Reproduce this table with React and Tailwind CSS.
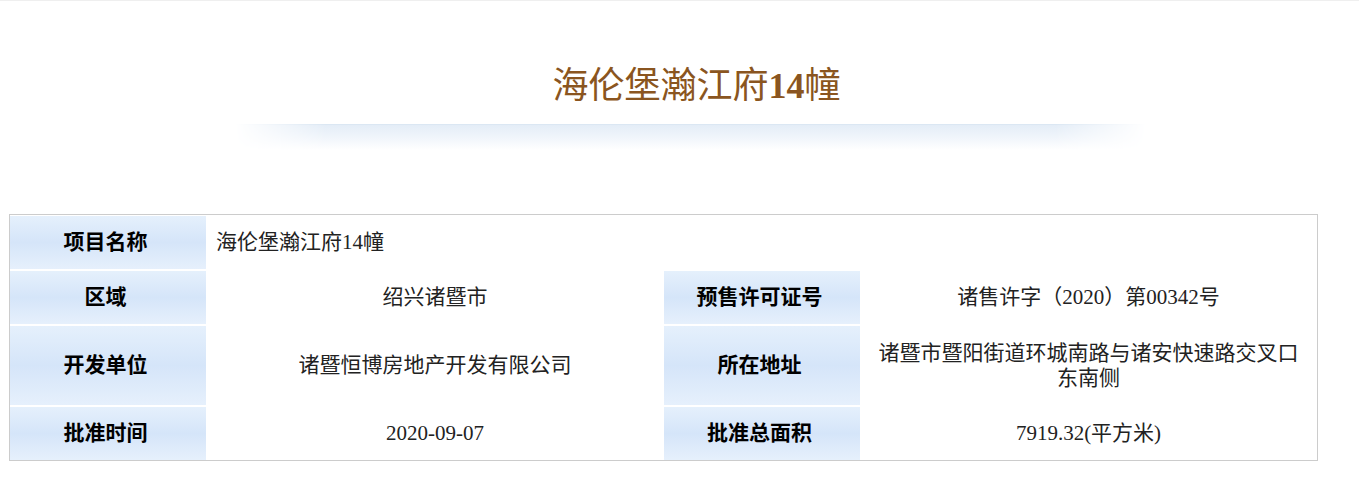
const rows = [
  { h: "h-[53px]", full: true, label: "项目名称", value: "海伦堡瀚江府14幢" },
  { h: "h-[53px]", label: "区域", value: "绍兴诸暨市", label2: "预售许可证号", value2: "诸售许字（2020）第00342号" },
  { h: "h-[79px]", label: "开发单位", value: "诸暨恒博房地产开发有限公司", label2: "所在地址", value2: "诸暨市暨阳街道环城南路与诸安快速路交叉口东南侧" },
  { h: "h-[53px]", label: "批准时间", value: "2020-09-07", label2: "批准总面积", value2: "7919.32(平方米)" },
];

const labelCls =
  "flex items-center justify-center pr-[5px] font-bold text-black bg-gradient-to-b from-[#e5f0fc] via-[#d5e5f9] to-[#e6f0fc]";

export default function App() {
  return (
    <div className="min-h-screen bg-white font-['Liberation_Serif','Noto_Sans_CJK_SC',serif]">
      <div className="h-px bg-[#efefef]" />

      <h1 className="mt-[65px] pl-[34px] text-center text-[36px] leading-[40px] font-normal text-[#8a5520]">
        海伦堡瀚江府<span className="font-bold">14</span>幢
      </h1>

      <div className="mt-[18px] ml-[235px] w-[911px] h-[26px] border-t border-[#dbe7f3] bg-gradient-to-b from-[#e4edf7] via-[#f0f5fb] to-white [mask-image:linear-gradient(to_right,transparent,black_10%,black_90%,transparent)]" />

      <div className="mt-[64px] ml-[9px] w-[1309px] border border-[#cccccc] pt-px grid grid-cols-[196px_458px_196px_457px] gap-y-[2px] text-[21px] leading-[25px]">
        {rows.map((r, i) =>
          r.full ? (
            <div key={i} className="contents">
              <div className={`${labelCls} ${r.h}`}>{r.label}</div>
              <div className={`col-span-3 flex items-center pl-[10px] text-[#222] ${r.h}`}>{r.value}</div>
            </div>
          ) : (
            <div key={i} className="contents">
              <div className={`${labelCls} ${r.h}`}>{r.label}</div>
              <div className={`flex items-center justify-center text-center text-[#222] ${r.h}`}>{r.value}</div>
              <div className={`${labelCls} ${r.h}`}>{r.label2}</div>
              <div className={`flex items-center justify-center text-center px-[10px] text-[#222] ${r.h}`}>{r.value2}</div>
            </div>
          )
        )}
      </div>
    </div>
  );
}
